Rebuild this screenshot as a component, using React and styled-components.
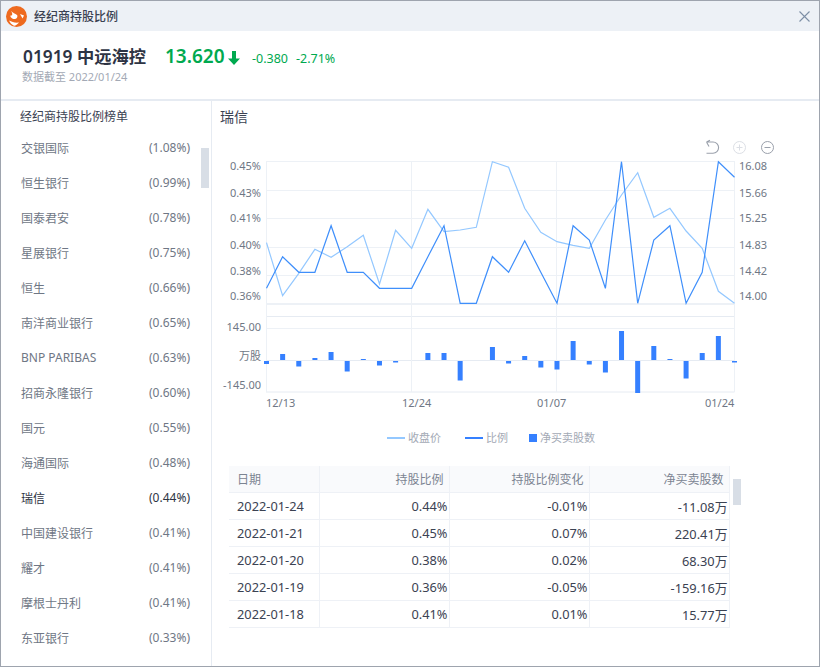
import React from "react";
import styled, { createGlobalStyle } from "styled-components";

const FONT = `"Noto Sans", "Noto Sans CJK SC", sans-serif`;

const Global = createGlobalStyle`
  html, body { margin: 0; padding: 0; background: #fff; }
  body { font-family: ${FONT}; }
`;

const Win = styled.div`
  width: 820px; height: 667px; box-sizing: border-box;
  border: 1px solid #9ea4ae;
  display: flex; flex-direction: column; overflow: hidden; background: #fff;
`;
const TitleBar = styled.div`
  height: 30px; flex: none; background: #edf1f6;
  display: flex; align-items: center; padding: 0 9px 0 5px;
`;
const TitleText = styled.div`
  margin-left: 7px; font-size: 12px; font-weight: 500; color: #3b4252; flex: 1;
`;
const Header = styled.div`
  height: 56px; flex: none; border-bottom: 2px solid #e6ebf2; padding: 12px 0 0 22px; box-sizing: content-box;
`;
const QuoteRow = styled.div`display: flex; align-items: baseline; height: 30px;`;
const StockName = styled.div`font-size: 17.3px; font-weight: 600; color: #2e3444; width: 142px;`;
const Price = styled.div`font-size: 19px; font-weight: 600; color: #00a94f; width: 63px;`;
const Arrow = styled.svg`align-self: center; margin-right: 12px; flex: none;`;
const Change = styled.div`font-size: 12.5px; color: #00a94f; margin-right: 8px;`;
const DateLine = styled.div`font-size: 11px; color: #a3a9b5; margin: -5px 0 0 -1px;`;

const Body = styled.div`flex: 1; display: flex; min-height: 0;`;
const Side = styled.div`
  width: 211px; flex: none; border-right: 1px solid #e6ebf2; position: relative; padding: 7px 0 0 20px; box-sizing: border-box;
`;
const SideTitle = styled.div`font-size: 12px; color: #3b4252; line-height: 18px; margin: 0 0 4px -1px;`;
const BrokerRow = styled.div`
  height: 35px; display: flex; justify-content: space-between; align-items: center;
  padding-right: 21px; font-size: 12px; color: ${p => (p.$active ? "#2e3444" : "#6f7785")};
`;
const ScrollThumb = styled.div`
  position: absolute; width: 8px; background: #d8dee6;
  left: ${p => p.$x}px; top: ${p => p.$y}px; height: ${p => p.$h}px;
`;
const Main = styled.div`flex: 1; position: relative; padding: 6px 0 0 8px; min-width: 0;`;
const MainTitle = styled.div`font-size: 14px; color: #3b4252; line-height: 20px;`;
const Chart = styled.svg`display: block; margin: -1px 0 0 -9px;`;
const ChartText = styled.text`font-family: ${FONT}; font-size: 11px; fill: ${p => p.$c || "#6f7785"};`;

const Table = styled.table`
  width: 500px; margin: 10px 0 0 9px; border-collapse: collapse; table-layout: fixed; font-size: 12px;
`;
const Th = styled.th`
  height: 26px; padding: 0 5px 0 8px; font-weight: 400; color: #7c8492; background: #f9fafc;
  text-align: ${p => (p.$left ? "left" : "right")}; border: 1px solid #eef1f6; border-width: 0 1px 1px 0;
`;
const Td = styled.td`
  height: 26px; padding: 0 1px 0 8px; color: #3b4252; font-size: 12.8px;
  text-align: ${p => (p.$left ? "left" : "right")}; border: 1px solid #eef1f6; border-width: 0 1px 1px 0;
`;

const brokers = [
  ["交银国际", "(1.08%)"], ["恒生银行", "(0.99%)"], ["国泰君安", "(0.78%)"], ["星展银行", "(0.75%)"],
  ["恒生", "(0.66%)"], ["南洋商业银行", "(0.65%)"], ["BNP PARIBAS", "(0.63%)"], ["招商永隆银行", "(0.60%)"],
  ["国元", "(0.55%)"], ["海通国际", "(0.48%)"], ["瑞信", "(0.44%)", true], ["中国建设银行", "(0.41%)"],
  ["耀才", "(0.41%)"], ["摩根士丹利", "(0.41%)"], ["东亚银行", "(0.33%)"],
];
const rows = [
  ["2022-01-24", "0.44%", "-0.01%", "-11.08万"],
  ["2022-01-21", "0.45%", "0.07%", "220.41万"],
  ["2022-01-20", "0.38%", "0.02%", "68.30万"],
  ["2022-01-19", "0.36%", "-0.05%", "-159.16万"],
  ["2022-01-18", "0.41%", "0.01%", "15.77万"],
];

const toY = v => 130 + v / 3;
const ratio = [475,380,427,427,287,427,427,475,475,475,380,287,520,520,380,427,332,427,520,287,330,475,95,520,330,287,520,427,95,142];
const price = [338,497,430,358,382,350,316,462,301,355,238,305,300,292,95,112,235,307,335,346,355,270,195,128,262,235,303,355,484,520];
const bars = [-3,6,-5.5,2,8,-10.5,1,-4.5,-1.5,0,7,7,-19.5,0,13,-2.5,4,-6.5,-8.5,19,-3.5,-11.5,29,-32,14,1,-17.5,7,24,-1.5];
const X0 = 266.5, STEP = (734.5 - 266.5) / 29;
const px = i => X0 + i * STEP;
const line = arr => arr.map((v, i) => `${px(i).toFixed(1)},${toY(v).toFixed(1)}`).join(" ");

const leftLabels = [["0.45%", 170], ["0.43%", 197], ["0.41%", 222], ["0.40%", 249], ["0.38%", 275], ["0.36%", 300]];
const rightLabels = [["16.08", 170], ["15.66", 197], ["15.25", 222], ["14.83", 249], ["14.42", 275], ["14.00", 300]];

function Plot() {
  const G = "#edf1f6";
  return (
    <Chart width="600" height="330" viewBox="211 126 600 330">
      {[161.5, 190.5, 218.5, 247.5, 275.5, 328.5].map(y => (
        <line key={y} x1="266" x2="734.5" y1={y} y2={y} stroke={G} />
      ))}
      <line x1="266" x2="734.5" y1="304" y2="304" stroke={G} strokeWidth="2" />
      <line x1="266" x2="734.5" y1="316.5" y2="316.5" stroke="#e6ebf2" />
      <line x1="266" x2="734.5" y1="392" y2="392" stroke="#e6ebf2" />
      <line x1="266" x2="734.5" y1="360.5" y2="360.5" stroke="#e6ebf2" />
      {[266.5, 411.5, 556.5, 734.5].map(x => (
        <line key={x} x1={x} x2={x} y1="161" y2="392" stroke={G} />
      ))}
      <polyline points={line(price)} fill="none" stroke="#94c8ff" strokeWidth="1.2" />
      <polyline points={line(ratio)} fill="none" stroke="#3f8ffb" strokeWidth="1.2" />
      {bars.map((b, i) =>
        b === 0 ? null : (
          <rect key={i} x={Math.min(px(i) - 2.5, 732)} y={b > 0 ? 360 - b : 361} width="5" height={Math.abs(b)} fill="#3580ff" />
        )
      )}
      {leftLabels.map(([t, y]) => (
        <ChartText key={t} x="261" y={y} textAnchor="end">{t}</ChartText>
      ))}
      {rightLabels.map(([t, y]) => (
        <ChartText key={t} x="739" y={y}>{t}</ChartText>
      ))}
      <ChartText x="261" y="331" textAnchor="end">145.00</ChartText>
      <ChartText x="261" y="360" textAnchor="end">万股</ChartText>
      <ChartText x="261" y="389" textAnchor="end">-145.00</ChartText>
      <ChartText x="266" y="407">12/13</ChartText>
      <ChartText x="402" y="407">12/24</ChartText>
      <ChartText x="537" y="407">01/07</ChartText>
      <ChartText x="705" y="407">01/24</ChartText>

      <line x1="387" x2="405" y1="438" y2="438" stroke="#94c8ff" strokeWidth="2" />
      <ChartText x="408" y="442" $c="#a3a9b5">收盘价</ChartText>
      <line x1="465" x2="483" y1="438" y2="438" stroke="#3580ff" strokeWidth="2" />
      <ChartText x="486" y="442" $c="#a3a9b5">比例</ChartText>
      <rect x="529" y="434" width="8" height="8" fill="#3580ff" />
      <ChartText x="540" y="442" $c="#a3a9b5">净买卖股数</ChartText>

      <path
        d="M706.5 142h6.5a5.6 5.6 0 0 1 0 11.2h-6.5M706.5 142l2.5 4.5M706.5 142l3.5-1.8"
        fill="none" stroke="#9aa0ab" strokeWidth="1.1"
      />
      <g fill="none" stroke="#dcdfe5">
        <circle cx="739.5" cy="147.5" r="6" />
        <path d="M736.5 147.5h6M739.5 144.5v6" />
      </g>
      <g fill="none" stroke="#9aa0ab">
        <circle cx="767.5" cy="147.5" r="6" />
        <path d="M764.5 147.5h6" />
      </g>
    </Chart>
  );
}

const Logo = () => (
  <svg width="21" height="21" viewBox="0 0 21 21" style={{ flex: "none" }}>
    <circle cx="10.5" cy="10.5" r="10.5" fill="#ee6a1f" />
    <path d="M5 5C7 7 9 7.500 11 9C12 10.500 11 13 8.500 13C6 13 4 11 4.500 9.500C6.500 10 7 8 5 5z" fill="#fff" />
    <path d="M3 14.500C6 16 9 17 13 16.500C11 19 9 20 7.500 19.500C5.500 18.500 4 16.500 3 14.500z" fill="#fff" />
    <path d="M14 8l4 1.500-1.500 3z" fill="#fff" />
  </svg>
);

export default function App() {
  return (
    <Win>
      <Global />
      <TitleBar>
        <Logo />
        <TitleText>经纪商持股比例</TitleText>
        <svg width="11" height="11" viewBox="0 0 11 11">
          <path d="M.5.5l10 10M10.500.5l-10 10" stroke="#7d8fa6" strokeWidth="1.1" />
        </svg>
      </TitleBar>
      <Header>
        <QuoteRow>
          <StockName>01919 中远海控</StockName>
          <Price>13.620</Price>
          <Arrow width="12" height="14" viewBox="0 0 12 14">
            <path d="M4 0h4v7.500h4L6 14 0 7.500h4z" fill="#00a94f" />
          </Arrow>
          <Change>-0.380</Change>
          <Change>-2.71%</Change>
        </QuoteRow>
        <DateLine>数据截至 2022/01/24</DateLine>
      </Header>
      <Body>
        <Side>
          <SideTitle>经纪商持股比例榜单</SideTitle>
          {brokers.map(([n, v, a]) => (
            <BrokerRow key={n} $active={a}>
              <span>{n}</span>
              <span>{v}</span>
            </BrokerRow>
          ))}
          <ScrollThumb $x={200} $y={47} $h={40} />
        </Side>
        <Main>
          <MainTitle>瑞信</MainTitle>
          <Plot />
          <Table>
            <colgroup>
              <col style={{ width: 90 }} />
              <col style={{ width: 130 }} />
              <col style={{ width: 140 }} />
              <col style={{ width: 140 }} />
            </colgroup>
            <thead>
              <tr>
                <Th $left>日期</Th>
                <Th>持股比例</Th>
                <Th>持股比例变化</Th>
                <Th>净买卖股数</Th>
              </tr>
            </thead>
            <tbody>
              {rows.map(r => (
                <tr key={r[0]}>
                  <Td $left>{r[0]}</Td>
                  <Td>{r[1]}</Td>
                  <Td>{r[2]}</Td>
                  <Td>{r[3]}</Td>
                </tr>
              ))}
            </tbody>
          </Table>
          <ScrollThumb $x={521} $y={378} $h={26} />
        </Main>
      </Body>
    </Win>
  );
}
